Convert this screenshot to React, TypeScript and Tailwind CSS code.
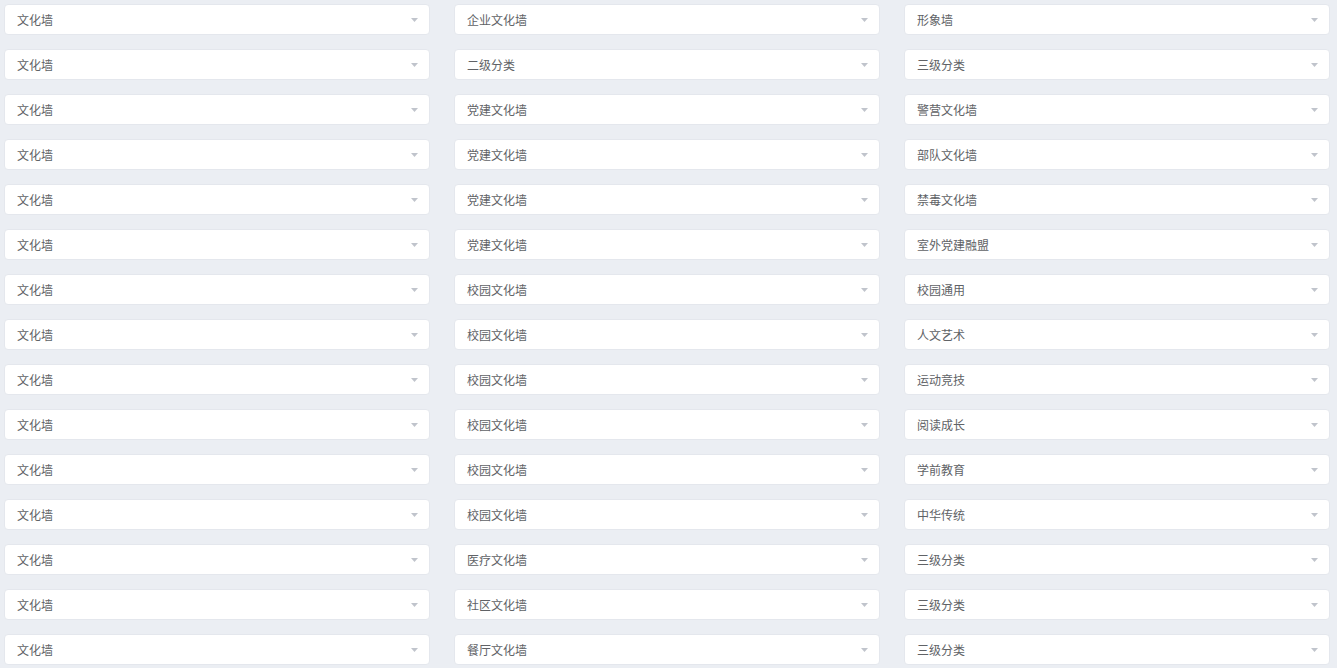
import React from "react";

const rows: [string, string, string][] = [
  ["文化墙", "企业文化墙", "形象墙"],
  ["文化墙", "二级分类", "三级分类"],
  ["文化墙", "党建文化墙", "警营文化墙"],
  ["文化墙", "党建文化墙", "部队文化墙"],
  ["文化墙", "党建文化墙", "禁毒文化墙"],
  ["文化墙", "党建文化墙", "室外党建融盟"],
  ["文化墙", "校园文化墙", "校园通用"],
  ["文化墙", "校园文化墙", "人文艺术"],
  ["文化墙", "校园文化墙", "运动竞技"],
  ["文化墙", "校园文化墙", "阅读成长"],
  ["文化墙", "校园文化墙", "学前教育"],
  ["文化墙", "校园文化墙", "中华传统"],
  ["文化墙", "医疗文化墙", "三级分类"],
  ["文化墙", "社区文化墙", "三级分类"],
  ["文化墙", "餐厅文化墙", "三级分类"],
];

function Select({ value }: { value: string }) {
  return (
    <div className="w-[426px] h-[31px] bg-white border border-[#e4e7ed] rounded-[4px] flex items-center pl-[12px] pr-[11px]">
      <span className="flex-1 text-[12px] leading-[18px] text-[#606266] whitespace-nowrap">{value}</span>
      <svg width="7" height="4" viewBox="0 0 7 4" className="shrink-0">
        <path d="M0 0 H7 L3.5 4 Z" fill="#c0c4cc" />
      </svg>
    </div>
  );
}

export default function App() {
  return (
    <div
      className="w-[1337px] h-[668px] bg-[#ebeef3] overflow-hidden pl-[4px] pt-[4px]"
      style={{ fontFamily: '"Microsoft YaHei", "Noto Sans CJK SC", "Noto Sans", sans-serif' }}
    >
      <div className="flex flex-col gap-[14px]">
        {rows.map((r, i) => (
          <div key={i} className="flex gap-[24px]">
            <Select value={r[0]} />
            <Select value={r[1]} />
            <Select value={r[2]} />
          </div>
        ))}
      </div>
    </div>
  );
}
